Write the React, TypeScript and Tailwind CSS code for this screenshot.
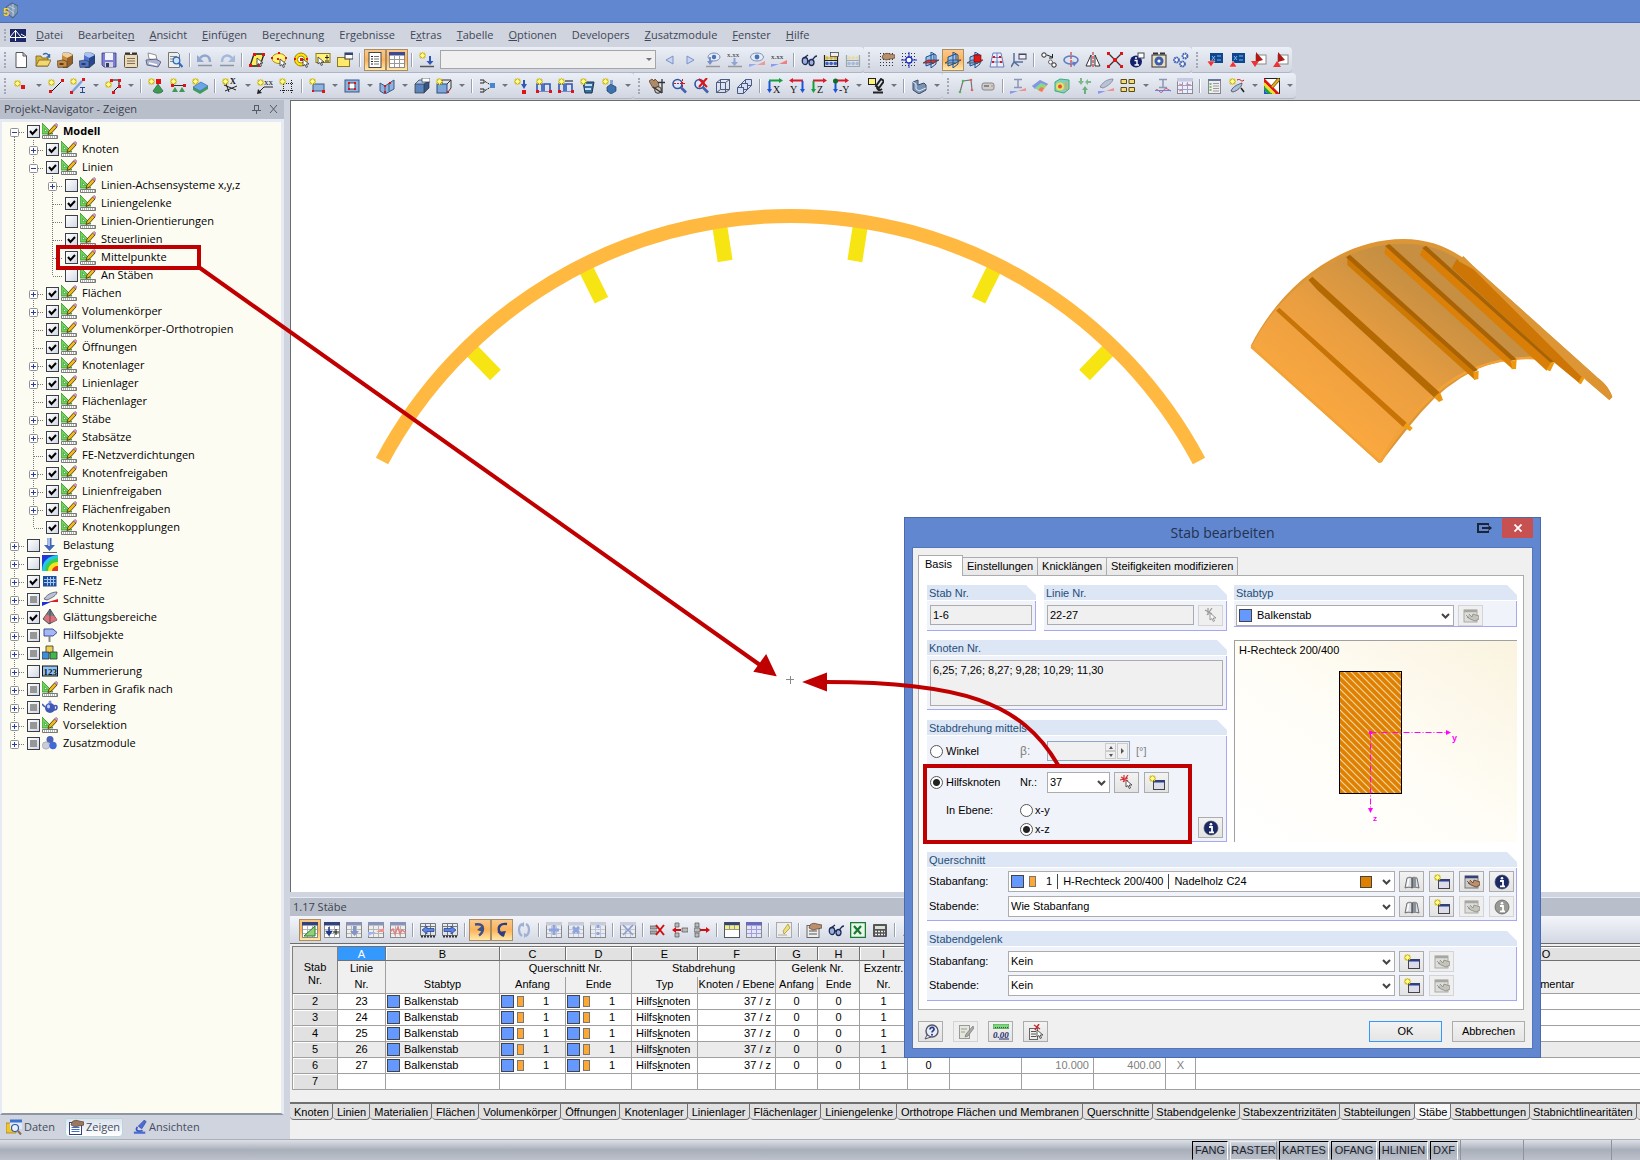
import type { ReactNode } from 'react'

const ui = "font-['Open_Sans','Noto_Sans',sans-serif]"
const ms = "font-['Liberation_Sans',sans-serif]"

/* ---------- icon parts ---------- */

const star = (x = 0, y = 0) => (
  <g transform={`translate(${x} ${y})`}>
    <path d="M3.5 0v7M0 3.5h7M1 1l5 5M6 1L1 6" stroke="#b9a400" strokeWidth="1.4" />
    <path d="M3.5 .5v6M.5 3.5h6M1.500 1.500l4 4M5.500 1.500l-4 4" stroke="#fff04a" strokeWidth="1" />
    <circle cx="3.5" cy="3.5" r="1.4" fill="#fffba0" />
  </g>
)
const dot = (x: number, y: number, s = 3) => <rect x={x} y={y} width={s} height={s} fill="#e01414" />
const cursor = (x: number, y: number) => (
  <path transform={`translate(${x} ${y})`} d="M0 0v7l2-1.5L3.2 8.5l1.3-.6L3.3 5H6z" fill="#fff" stroke="#444" strokeWidth=".9" />
)
const gridDots = (c = '#333') => (
  <path d="M1 1.5h14M1 4.5h14M1 7.5h14M1 10.500h14M1 13.500h14" stroke={c} strokeDasharray="1 2" />
)
const loupe = (
  <>
    <circle cx="6.500" cy="6" r="4.500" fill="#dbe9ff" stroke="#33539b" strokeWidth="1.600" />
    <path d="M10 9.500l5 5" stroke="#3f62b0" strokeWidth="2.600" />
  </>
)
const tableBase = (head = '#34427a', body = '#fff', line = '#b5b5b5') => (
  <>
    <rect x=".5" y=".5" width="15" height="15" fill={body} stroke="#8a8a8a" />
    <rect x="0" y="0" width="16" height="3.500" fill={head} />
    <path d="M1 7.500h14M1 11.500h14M5.500 4v11M10.500 4v11" stroke={line} />
  </>
)
const downArrow = (c = '#2f57b5') => <path d="M7 4h3v5h3l-4.500 5L4 9h3z" fill={c} />
const plane = (redFirst: boolean, block: boolean) => (
  <>
    <path d="M3 5l8-3v9l-8 3z" fill="#9cc4ee" stroke="#1d4f8f" />
    <path d="M0 11l5-3h11l-5 3z" fill={redFirst ? '#e33131' : '#6fa5de'} stroke="#333" strokeWidth=".7" />
    <path d="M8 0l5 3v9l-5 4z" fill="none" stroke="#1d4f8f" />
    {block && <rect x="7" y="3" width="7" height="7" fill="#e01818" stroke="#7a0000" strokeWidth=".6" />}
  </>
)
const axis = (label: string, h: string, v: string, flip = false) => (
  <>
    <path d={flip ? 'M14 2.500H3' : 'M2 2.500h11'} stroke={h} strokeWidth="2" />
    <path d={flip ? 'M4 0v5L0 2.500z' : 'M12 0v5l4-2.500z'} fill={h} />
    <path d={flip ? 'M13.500 3v9' : 'M2.500 3v9'} stroke={v} strokeWidth="2" />
    <path d={flip ? 'M11 11h5l-2.500 4z' : 'M0 11h5l-2.500 4z'} fill={v} />
    <text x={flip ? 1 : 6} y="15" fontSize="10" fontFamily="Liberation Serif" fill="#111">{label}</text>
  </>
)
const abacus = (frame: string, a: string, b: string) => (
  <>
    <path d="M1.500 3v12M14.500 3v12M1 8.500h14M1 14.500h14" stroke={frame} strokeWidth="1.200" />
    <path d="M4 6h9" stroke={a} strokeWidth="3.600" strokeDasharray=".1 4" strokeLinecap="round" />
    <path d="M4 11.500h9" stroke={b} strokeWidth="3.600" strokeDasharray=".1 4" strokeLinecap="round" />
  </>
)
const supports = (
  <>
    <path d="M1 13V6h5v7M8 13V6h6v7" fill="none" stroke="#2f57b5" strokeWidth="1.600" />
    <path d="M1 13.500h14" stroke="#6f8fd0" />
    {dot(0, 12)}
    {dot(13, 12)}
  </>
)
const box3d = (front: string, top: string, side: string) => (
  <>
    <path d="M1 6h9v9H1z" fill={front} />
    <path d="M1 6l4-4h10l-5 4z" fill={top} />
    <path d="M10 6l5-4v8l-5 5z" fill={side} />
    <path d="M1 6h9v9H1zM1 6l4-4h10l-5 4M15 2v8l-5 5" fill="none" stroke="#333" strokeWidth=".7" />
  </>
)
const cabinet = (front: string, top: string, side: string) => (
  <>
    <path d="M6 1h6l4 2v8l-6 5H6z" fill={side} stroke="#333" strokeWidth=".6" />
    <path d="M6 1h6l4 2-6 3-5-2z" fill={top} />
    <path d="M5 3l5 3v4H5z" fill={front} />
    <path d="M0 9l6-1 4 1.500V15l-9 .5z" fill={front} stroke="#333" strokeWidth=".6" />
    <path d="M2.500 12h4" stroke="#222" strokeWidth="1.400" />
  </>
)
const hand = (c = '#b98f6e') => <path d="M4 3c2-2 5-2 7-1l5 1v3l-5 1-4 1-4-2z" fill={c} stroke="#5a4030" strokeWidth=".7" />
const infoBall = (c: string) => (
  <>
    <circle cx="8" cy="8" r="7" fill={c} stroke="#445" strokeWidth=".6" />
    <path d="M6 7h3v5M6 12.300h5" stroke="#fff" strokeWidth="1.800" fill="none" />
    <circle cx="8" cy="4.200" r="1.300" fill="#fff" />
  </>
)
const ipe = (c: string) => <path d="M4 1.500h8M8 1.500v8M4 9.500h8" stroke={c} strokeWidth="1.500" />

const icons: Record<string, ReactNode> = {
  new: <path d="M3 .5h7l3.500 3.500v11.500H3z M10 .5V4h3.500" fill="#fff" stroke="#555" />,
  open: (
    <>
      <path d="M1 14V4h5l1 2h6v8z" fill="#d9b23c" stroke="#76601b" strokeWidth=".8" />
      <path d="M1 14l3-6h12l-3 6z" fill="#f2d873" stroke="#76601b" strokeWidth=".8" />
      <path d="M8 2.500c3-2 5-1 6 2M14.500 2v3h-3" fill="none" stroke="#3968a8" strokeWidth="1.400" />
    </>
  ),
  cabBrown: cabinet('#c98a3e', '#efcf9a', '#94602a'),
  cabBlue: cabinet('#4e74cc', '#a9c2f6', '#27468f'),
  save: (
    <>
      <path d="M1 1h14v14H3l-2-2z" fill="#7d7fd4" stroke="#3a3a7a" strokeWidth=".8" />
      <rect x="4" y="1" width="8" height="7" fill="#f2f2fa" />
      <rect x="4" y="10" width="8" height="5" fill="#d5d5dd" />
      <rect x="5" y="11" width="3" height="4" fill="#39396a" />
    </>
  ),
  clip: (
    <>
      <rect x="1.500" y="2.500" width="13" height="13" rx="1" fill="#e9d9bd" stroke="#67563c" />
      <path d="M2 1.500h5M9 1.500h5" stroke="#333" strokeWidth="2" />
      <path d="M4 6.500h8M4 9h8M4 11.500h8" stroke="#826f52" />
    </>
  ),
  print: (
    <>
      <path d="M3 1l8 2 1 5-8-1z" fill="#fff" stroke="#777" strokeWidth=".8" />
      <path d="M1 8l10-1 5 3-3 5-11-2z" fill="#aeb4d3" stroke="#4a4f70" strokeWidth=".8" />
      <path d="M4 11l8 2" stroke="#fff" strokeWidth="1.500" />
    </>
  ),
  preview: (
    <>
      <path d="M1.500 .5h9l2 2v13h-11z" fill="#eee" stroke="#777" />
      <path d="M3 4.500h7M3 7h4M3 9.500h4" stroke="#888" />
      <circle cx="9.500" cy="8.500" r="3.300" fill="#cfe2fb" stroke="#2f6cb5" strokeWidth="1.300" />
      <path d="M12 11l3.500 4" stroke="#2f6cb5" strokeWidth="2" />
    </>
  ),
  undo: <><path d="M3 6c4-4 10-3 10 4" fill="none" stroke="#8fa6cd" strokeWidth="2.500" /><path d="M0 3v7h7z" fill="#8fa6cd" /><path d="M1 13.500h14" stroke="#8d95a5" strokeWidth="1.500" /></>,
  redo: <><path d="M13 6c-4-4-10-3-10 4" fill="none" stroke="#a3b9d8" strokeWidth="2.500" /><path d="M16 3v7H9z" fill="#a3b9d8" /><path d="M1 13.500h14" stroke="#8d95a5" strokeWidth="1.500" /></>,
  selPar: <><path d="M5 2h10l-4 12H1z" fill="#ffee5e" stroke="#222" strokeWidth="1.300" />{dot(4, 1)}{dot(13, 1)}{dot(0, 12)}{dot(9, 12)}{cursor(8, 6)}</>,
  selEll: <><ellipse cx="8" cy="6.500" rx="7" ry="5" fill="#fff17a" stroke="#b09000" />{dot(0, 5, 2)}{dot(7, 0, 2)}{dot(14, 5, 2)}{dot(6, 6, 2)}{cursor(9, 7)}</>,
  selCirc: <><circle cx="8" cy="7.500" r="6.500" fill="#ffe400" stroke="#a08400" /><circle cx="8" cy="7.500" r="3.500" fill="#fff" stroke="#a08400" />{dot(7, 6)}{dot(1, 6, 2)}{dot(13, 6, 2)}{cursor(10, 7)}</>,
  selRect: <><rect x="1" y="1.500" width="14" height="9" fill="#fff17a" stroke="#8d7a20" /><path d="M10 5.500h4M12 3v4.500M10 9h4" stroke="#222" />{cursor(3, 5)}</>,
  selWin: <><rect x=".5" y="5.500" width="12" height="9" fill="#ffe96a" stroke="#8d7a20" /><rect x="8" y="1" width="8" height="6" fill="#fff" stroke="#334" /><path d="M8 2h8" stroke="#34427a" strokeWidth="2" /></>,
  listView: <><rect x="2" y=".5" width="12" height="15" fill="#fff" stroke="#444" /><path d="M4 4.500h2M4 7h2M4 9.500h2M4 12h2" stroke="#222" /><path d="M7 4.500h5M7 7h5M7 9.500h5M7 12h5" stroke="#777" /></>,
  tableView: tableBase('#3c4b8c', '#fff', '#999'),
  loadNew: <>{star(0, 0)}<path d="M10 4h2v5h2.500L11 13 7.500 9H10z" fill="#2f57b5" /><path d="M1 14.500h14" stroke="#555" strokeWidth="1.500" /></>,
  prev: <path d="M12 4v8L5 8z" fill="#c6d5f3" stroke="#7c93c9" />,
  next: <path d="M4 4v8l7-4z" fill="#c6d5f3" stroke="#7c93c9" />,
  eyeDown: <><ellipse cx="9" cy="5" rx="6" ry="4" fill="#e6ecf7" stroke="#7d8fb5" /><circle cx="9" cy="5" r="2.200" fill="#4a72b8" /><path d="M5 5v6" stroke="#7791c8" strokeWidth="2" /><path d="M2 9h6l-3 4z" fill="#7791c8" /><path d="M1 14.500h14" stroke="#999" strokeWidth="1.500" /></>,
  xxDown: <><text x="0" y="5" fontSize="7" fontFamily="Liberation Serif" fill="#333">x.xx</text><path d="M7.500 6v5" stroke="#8ea4d3" strokeWidth="2" /><path d="M4 10h7l-3.500 4z" fill="#8ea4d3" /><path d="M1 14.500h14" stroke="#999" strokeWidth="1.500" /></>,
  eyeRes: <><ellipse cx="8" cy="5" rx="6.500" ry="4" fill="#e6ecf7" stroke="#7d8fb5" /><circle cx="8" cy="5" r="2.400" fill="#4a72b8" /><path d="M8 13h8V9z" fill="#ef9a9a" /><path d="M0 12h8l-8 3z" fill="#9aa9ef" /></>,
  xxRes: <><text x="0" y="7" fontSize="7" fontFamily="Liberation Serif" fill="#222">x.xx</text><path d="M8 12h8V8z" fill="#ef8080" /><path d="M0 12h8l-8 3z" fill="#8a9af0" /></>,
  glasses: <><ellipse cx="4" cy="9" rx="2.700" ry="3.500" fill="#9bb0dd" stroke="#1f2b55" strokeWidth="1.300" /><ellipse cx="10.500" cy="10.500" rx="2.500" ry="3" fill="#9bb0dd" stroke="#1f2b55" strokeWidth="1.300" /><path d="M3 6l4-3M7 9h1.500M11 8c2-1 2-4 5-4" fill="none" stroke="#1f2b55" strokeWidth="1.300" /></>,
  abacus: <>{abacus('#222', '#d8bb35', '#3f62c0')}<rect x="7.500" y=".5" width="8" height="4" fill="#eee" stroke="#333" strokeWidth=".7" /></>,
  abacusOff: abacus('#9aa', '#e5dca9', '#a9b7dc'),
  handGrid: <>{gridDots()}{hand()}</>,
  grid: <>{gridDots()}<path d="M8 0v16M0 8h16" stroke="#1d2fc4" /><circle cx="8" cy="8" r="3" fill="#fff" stroke="#1d2fc4" strokeWidth="1.300" /></>,
  planeA: plane(true, false),
  planeB: plane(false, false),
  planeC: plane(false, true),
  mesh: <><path d="M4 1h8l3 14H1zM8 1v14M3 5.500h10M2 10h12" fill="#eef" stroke="#6680b8" />{dot(4, 4, 2)}{dot(10, 4, 2)}{dot(3, 9, 2)}{dot(11, 9, 2)}</>,
  csys: <><path d="M3 1v9h9M3 10l-3 5M3 10l5 4" fill="none" stroke="#56709f" strokeWidth="1.500" /><rect x="8" y="2" width="7" height="5" fill="#eef" stroke="#445" /><path d="M8 2.500h7" stroke="#445" /></>,
  copyMove: <><circle cx="3" cy="3" r="2.200" fill="#fff" stroke="#222" /><circle cx="13" cy="13" r="2.200" fill="#fff" stroke="#222" /><circle cx="9.500" cy="10" r="2" fill="#fff" stroke="#666" /><path d="M6 3l5 2M11.500 2v4H8" stroke="#222" fill="none" /></>,
  rotate: <><path d="M8 0v16" stroke="#d01010" strokeDasharray="3 1" /><ellipse cx="8" cy="8" rx="7" ry="4" fill="none" stroke="#5d7cc4" strokeWidth="1.600" /><path d="M9 9.500l5 1-3 4z" fill="#5d7cc4" /></>,
  mirror: <><path d="M8 0v16" stroke="#d01010" strokeDasharray="3 1" /><path d="M6 3v11H1z" fill="#fff" stroke="#333" /><path d="M10 3v11h5z" fill="#fff" stroke="#333" /></>,
  scale: <><path d="M2 2l12 12M14 2L2 14" stroke="#333" strokeWidth="1.300" />{dot(0, 0)}{dot(13, 0)}{dot(0, 13)}{dot(13, 13)}{dot(6, 6, 4)}</>,
  infoWin: <><circle cx="7" cy="9.500" r="6" fill="#14206b" /><path d="M5.500 8.500H8V13M5.500 13H10" stroke="#fff" strokeWidth="1.400" fill="none" /><circle cx="7" cy="6" r="1" fill="#fff" /><rect x="9" y="1" width="6" height="5" fill="#fff" stroke="#445" /></>,
  camera: <><rect x="1" y="3" width="14" height="12" fill="#e9dcc0" stroke="#333" /><path d="M2 1.500h5M9 1.500h5" stroke="#333" strokeWidth="2" /><circle cx="8" cy="9" r="4.500" fill="#3b5ea8" /><circle cx="8" cy="9" r="1.600" fill="#fff" /></>,
  gears: <g fill="#fff" stroke="#3f64b5" strokeWidth="2" strokeDasharray="1.500 .5"><circle cx="3.500" cy="8" r="2.400" /><circle cx="12" cy="4" r="2.400" /><circle cx="9.500" cy="12" r="2.400" /></g>,
  impA: <><rect x="3" y="1" width="13" height="10" fill="#10468e" /><path d="M5 4l3 4M8 4L5 8M10 4h4M10 8h4" stroke="#7ab8f0" /><path d="M0 9h8l-4 6z" fill="#e33" stroke="#fff" strokeWidth=".5" /></>,
  expA: <><rect x="3" y="1" width="13" height="10" fill="#10468e" /><path d="M5 4l3 4M8 4L5 8M10 4h4M10 8h4" stroke="#7ab8f0" /><path d="M0 15h8L4 9z" fill="#e33" stroke="#fff" strokeWidth=".5" /></>,
  impB: <><rect x="5" y="3" width="10" height="9" fill="#fff" stroke="#888" /><path d="M5 0l7 8-7 2z" fill="#b01818" /><path d="M0 9h8l-4 6z" fill="#e33" /></>,
  expB: <><rect x="5" y="3" width="10" height="9" fill="#fff" stroke="#888" /><path d="M5 0l7 8-7 2z" fill="#b01818" /><path d="M0 15h8L4 9z" fill="#e33" /></>,

  node: <>{star(1, 2)}{dot(8, 7, 4)}</>,
  line: <><path d="M3 14L14 3" stroke="#111" />{star(0, 1)}{dot(13, 1)}{dot(1, 12)}</>,
  lineBeam: <><path d="M2 14L12 3" stroke="#7da4d8" strokeWidth="2.500" />{star(0, 0)}{dot(12, 0)}{dot(0, 13)}<path d="M10 9.500h5M12.500 9.500v5M10 14.500h5" stroke="#29469a" /></>,
  poly: <><path d="M5 2h9v6l-6 6" fill="none" stroke="#111" />{star(0, 3)}{dot(5, 1)}{dot(13, 1)}{dot(13, 7)}{dot(7, 13)}</>,
  support: <>{star(0, 0)}{dot(8, 1, 5)}<path d="M10 6l5 7c-2 3-8 3-10 0z" fill="#3d9a52" stroke="#1c5a2b" strokeWidth=".6" /></>,
  hinge: <>{star(0, 0)}<path d="M2 7.500h13" stroke="#333" />{dot(1, 6)}{dot(13, 6)}<path d="M5 9l3 5H2zM12 9l3 5H9z" fill="#3d9a52" /></>,
  surfSupport: <><path d="M1 9l7 4v3l-7-4zM8 13l8-5v3l-8 5z" fill="#3fa04f" /><path d="M1 9l8-5 7 4-8 5z" fill="#6aa6ea" stroke="#2b5b98" strokeWidth=".6" />{star(0, 0)}</>,
  dimX: <><path d="M3 3l4 11M3 13l12-5M2 7l12 5" stroke="#222" fill="none" />{star(0, 0)}<text x="8" y="6" fontSize="8" fontWeight="bold" fontFamily="Liberation Serif" fill="#111">X</text></>,
  dimXX: <><path d="M2 14l5-5h9" stroke="#222" fill="none" /><path d="M0 16l1-5 4 4z" fill="#222" />{star(0, 1)}<text x="7" y="7" fontSize="9" fontFamily="Liberation Serif" fill="#111">xx</text></>,
  selDots: <><path d="M4.500 2v13M12.500 2v13M1 5.500h14M1 12.500h14" stroke="#222" strokeDasharray="1 1" />{star(0, 0)}</>,
  area: <><rect x="4" y="6" width="11" height="7" fill="#8fb3dd" stroke="#36588a" />{star(0, 0)}{dot(13, 12)}{dot(3, 12, 2)}</>,
  opening: <><rect x="1" y="2" width="14" height="12" fill="#8fb3dd" stroke="#36588a" /><rect x="5" y="5" width="6" height="6" fill="#fff" stroke="#445" />{dot(4, 4, 2)}{dot(10, 4, 2)}{dot(4, 10, 2)}{dot(10, 10, 2)}</>,
  curved: <><path d="M1 5l5 3 9-6v9l-9 5-5-3z" fill="#8fb3dd" stroke="#36588a" /><path d="M6 8v7M10 5v8" stroke="#36588a" />{dot(5, 7, 2)}{dot(10, 4, 2)}{dot(5, 13, 2)}</>,
  cubeWin: <>{box3d('#5c86c0', '#a9c8ee', '#33558a')}<rect x="8" y="0" width="8" height="4" fill="#fff" stroke="#334" strokeWidth=".7" /></>,
  cubeAdd: <><path d="M6 2h9v8l-3 4M6 2v4M15 2l-4 4" fill="none" stroke="#333" /><rect x="1" y="6" width="10" height="9" fill="#7da7d8" stroke="#2b4d80" />{star(0, 0)}{dot(11, 13, 2)}</>,
  connect: <><path d="M1 2h4v3H1M1 11h4v3H1" fill="none" stroke="#222" /><path d="M6 3.500l5 3M6 12.500l5-3" stroke="#222" strokeDasharray="2 1" /><rect x="11" y="5" width="5" height="5" fill="#4a86d0" /></>,
  load1: <>{star(0, 0)}<path d="M10 2v5" stroke="#2f57b5" strokeWidth="2" /><path d="M7 6h6l-3 5z" fill="#2f57b5" />{dot(8, 12, 4)}</>,
  load2: <>{supports}{star(0, 0)}</>,
  load3: <>{supports}<path d="M7 3h8" stroke="#111" />{star(0, 0)}</>,
  load4: <><path d="M3 4h11l-2 11H5z" fill="#3c6f9c" stroke="#1a3550" /><path d="M5 7h7M5 11h6" stroke="#bfe0ff" strokeWidth="2" />{star(0, 0)}</>,
  load5: <><path d="M5 9l4-3 5 3v4l-5 3-4-3z" fill="#3d72b0" stroke="#1d3c66" strokeWidth=".7" /><path d="M8 2h3v4H8z" fill="#89a8d0" />{star(0, 0)}</>,
  pan: <><path d="M0 3l3-2 2 2 1-2 3 3 1 4-2 3-4-1z" fill="#b08a66" stroke="#4a3320" strokeWidth=".7" /><circle cx="9" cy="12" r="3.300" fill="#cfc7b5" stroke="#333" /><path d="M13 1v14M9 4.500h7M4 9l9 6" stroke="#333" strokeWidth="1.300" /></>,
  zoomRed: <>{loupe}<path d="M3 5.500h12M11.500 1v9" stroke="#e01414" strokeDasharray="2 1" /></>,
  zoomX: <>{loupe}<path d="M6 1l8 8M14 0L6 9" stroke="#e01414" strokeWidth="2" /></>,
  iso: <path d="M1.500 4.500h9v10h-9zM1.500 4.500l4-3h9v10l-4 3M14.500 1.500l-4 3M5.500 1.500v10h9M5.500 11.500l-4 3" fill="none" stroke="#4b5a80" />,
  cubes: <path d="M.5 9.500h6v6h-6zM4.500 5.500h6v6h-4v-2h-2zM8.500 1.500h6v6h-4v-2h-2zM.5 9.500l8-8M14.500 7.500l-8 8" fill="#d5def2" stroke="#4b5a80" />,
  axX: axis('X', '#14a03c', '#1c56d8'),
  axY: axis('Y', '#d81c2c', '#1c56d8', true),
  axZ: axis('Z', '#d81c2c', '#14a03c'),
  axNY: <>{axis('-Y', '#d81c2c', '#1c56d8')}<circle cx="2.500" cy="3" r="2.500" fill="#0f6c24" /></>,
  scope: <><path d="M13 1l3 2-5 7-3-2zM9 9c0 3 2 4 5 2M5 14.500h10" fill="none" stroke="#222" strokeWidth="2" /><rect x=".5" y=".5" width="7" height="6" fill="#fff27a" stroke="#222" /></>,
  lshape: <><path d="M2 4l5-2v5l6-2 2 2v5l-7 4-6-4z" fill="#7993b5" stroke="#3a4d68" /><path d="M2 4l3 2v5l3 2 7-3" fill="none" stroke="#dfe9f5" /></>,
  frame: <><path d="M2 14L5 3l8-1 1 10" fill="none" stroke="#777" strokeWidth="1.200" /><circle cx="5" cy="3" r="1.300" fill="#5b5" /><circle cx="13" cy="2" r="1.300" fill="#d66" /><circle cx="2" cy="14" r="1.300" fill="#5b5" /><circle cx="14" cy="12" r="1.300" fill="#d66" /></>,
  cam2: <><rect x="2" y="5" width="12" height="7" rx="2" fill="#ccc" stroke="#888" /><rect x="4" y="7" width="5" height="2" fill="#888" /><circle cx="12" cy="8" r="1" fill="#e88" /></>,
  beamRes: <>{ipe('#8d97b5')}<path d="M8 13h8v-3z" fill="#f09090" /><path d="M0 13h8l-8 3z" fill="#8a9af0" /></>,
  fan: <><path d="M0 8l8-6 8 4-6 8z" fill="#f0b860" /><path d="M0 8l8-6 8 4-2 2-5-2-6 5z" fill="#7f96ee" /><path d="M3 10l6-5 5 2-2 3-3-1-3 3z" fill="#86dc86" /><path d="M6 12l3-3 3 1-2 4z" fill="#f07a5a" /></>,
  cubeCol: <><path d="M1 4l5-3 9 1v9l-5 4-9-2z" fill="#7fd0c0" stroke="#4a7" /><circle cx="6" cy="8.500" r="4" fill="#e6e25a" /><circle cx="6" cy="8.500" r="2" fill="#ea4a3a" /><path d="M12 4v8" stroke="#f0a040" strokeWidth="1.500" /></>,
  arrowsG: <><path d="M4 0v3H2l3 4 3-4H6V0zM15 3h-3V1L9 4l3 3V5h3z" fill="#7cb98a" /><path d="M8 16v-4H6l3-4 3 4h-2v4z" fill="#6bb07b" /></>,
  blade: <><path d="M2 9C6 2 12 1 15 1c0 3-5 7-10 9z" fill="#b7c4d8" stroke="#778" strokeWidth=".7" /><path d="M8 13h8v-3z" fill="#f09090" /><path d="M0 13h8l-8 3z" fill="#8a9af0" /></>,
  boxes: <g fill="#f1dd7a" stroke="#5a4a10"><path d="M1 1.500h5.500v4H1zM9 1.500h5.500v4H9zM1 9.500h5.500v4H1zM9 9.500h5.500v4H9z" /></g>,
  beamCurve: <>{ipe('#8d97b5')}<path d="M0 13c3-5 5 5 8 0s5-1 8 0" fill="none" stroke="#d05080" /><path d="M0 12.500h16" stroke="#7080d0" /></>,
  tableDia: <>{tableBase('#c5cade', '#eef', '#9aa3c8')}<path d="M2 6l4 1M9 6l5 1M2 13l4-1" stroke="#e08080" /></>,
  doc: <><rect x="1.500" y="1.500" width="12" height="14" fill="#eee" stroke="#888" /><path d="M1 2h13" stroke="#67779f" strokeWidth="2" /><path d="M3.500 5v9" stroke="#7cba7c" strokeWidth="2" strokeDasharray="2 1" /><path d="M6 5.500h6M6 8h6M6 10.500h6M6 13h6" stroke="#999" /></>,
  knife: <><path d="M2 13C4 8 10 6 13 5c0 4-5 8-9 9z" fill="#aac0de" stroke="#333" strokeWidth=".7" /><path d="M8 2c4-2 4 3 7 0" stroke="#d01010" fill="none" /><path d="M12 10l3 4" stroke="#222" strokeWidth="1.500" />{star(0, 0)}</>,
  palette: (
    <>
      <rect x=".5" y=".5" width="15" height="15" fill="#fff" stroke="#222" />
      <path d="M0 0l16 16h-4L0 4z" fill="#e01414" />
      <path d="M0 4l12 12H8L0 8z" fill="#f2e020" />
      <path d="M0 8l8 8H4l-4-4z" fill="#1ea03c" />
      <path d="M0 12l4 4H0z" fill="#1c56d8" />
      <path d="M15 1L8 9" stroke="#5a4310" strokeWidth="3.400" />
      <path d="M15 1L8 9" stroke="#e8ac22" strokeWidth="2" />
    </>
  ),

  tEdit: <>{tableBase()}<path d="M2 14L13 4v10z" fill="#8fd07c" stroke="#2c7a2c" /></>,
  tDown: <>{tableBase()}<path d="M5 5v6M2.500 9.500h5L5 13z" stroke="#1c3b8c" fill="#1c3b8c" strokeWidth="1.500" /><path d="M9 10h6M12 7v6" stroke="#111" /></>,
  tLoad: <>{tableBase('#8a93b5', '#eee')}{downArrow('#8195c8')}</>,
  tRes: <>{tableBase('#8a93b5', '#eee')}<path d="M8 10h8V6z" fill="#f09090" /><path d="M0 10h8l-8 4z" fill="#a0b0f0" /></>,
  tWave: <>{tableBase('#8a93b5', '#eee')}<path d="M0 10l3-3 2 5 3-7 2 7 2-4 4 3" stroke="#e08080" fill="none" strokeWidth="1.500" /></>,
  tLeft: <><path d="M.5 1.500h15v12H.5zM.5 4.500h15M5.500 1v12M10.500 1v12" stroke="#777" /><path d="M1 14.500h14" stroke="#333" strokeDasharray="2 1" strokeWidth="2" /><path d="M2 8l5-4v2.500h7v3H7V12z" fill="#5a84e0" stroke="#1d3b8c" strokeWidth=".7" /></>,
  tRight: <><path d="M.5 1.500h15v12H.5zM.5 4.500h15M5.500 1v12M10.500 1v12" stroke="#777" /><path d="M1 14.500h14" stroke="#333" strokeDasharray="2 1" strokeWidth="2" /><path d="M14 8L9 4v2.500H2v3h7V12z" fill="#5a84e0" stroke="#1d3b8c" strokeWidth=".7" /></>,
  tHookR: <><path d="M3 2.500c6-1 8 1 8 4s-1 5-4 7" fill="none" stroke="#3d5288" strokeWidth="2.400" /><path d="M5 8l6 2V3z" fill="#3d5288" /></>,
  tHookL: <><path d="M13 2C6 1 4 5 5 9c1 3 3 4 5 5" fill="none" stroke="#2d3f80" strokeWidth="2.400" /><path d="M3 10l9-1-2 5z" fill="#2d3f80" /></>,
  tSync: <><path d="M6 2C2 4 2 11 6 14M10 2c4 2 4 9 0 12" fill="none" stroke="#9fb0d2" strokeWidth="2.200" /><path d="M8 0v5L4 3zM8 16v-5l4 2z" fill="#9fb0d2" /></>,
  tAdd: <>{tableBase('#c8ccd8', '#e9ebf2', '#c0c4d4')}<path d="M8 3v10M3 8h10" stroke="#8fa4dc" strokeWidth="3" /></>,
  tCross: <>{tableBase('#c8ccd8', '#e9ebf2', '#c0c4d4')}<path d="M5 5l6 6M11 5l-6 6" stroke="#8fa4dc" strokeWidth="3" /></>,
  tDots: <>{tableBase('#c8ccd8', '#e9ebf2', '#c0c4d4')}<path d="M8 3v3M8 10v3" stroke="#8fa4dc" strokeWidth="3" /></>,
  tX: <>{tableBase('#c8ccd8', '#e9ebf2', '#c0c4d4')}<path d="M3 3l10 10M13 3L3 13" stroke="#8a9cc8" strokeWidth="1.500" /></>,
  tDel: <><path d="M0 4h7v3H0zM0 9h7v3H0z" fill="#aaa" stroke="#555" strokeWidth=".7" /><path d="M6 3l8 10M14 3L6 13" stroke="#d01010" strokeWidth="2" /></>,
  tRowL: <><path d="M3 1h4v4H3zM3 11h4v4H3zM10 6h6v4h-6z" fill="#bbb" stroke="#555" strokeWidth=".7" /><path d="M9 8H2" stroke="#d01010" strokeWidth="2" /><path d="M4 5v6L0 8z" fill="#d01010" /></>,
  tRowR: <><path d="M1 1h4v4H1zM1 11h4v4H1zM0 6h6v4H0z" fill="#bbb" stroke="#555" strokeWidth=".7" /><path d="M6 8h7" stroke="#d01010" strokeWidth="2" /><path d="M12 5v6l4-3z" fill="#d01010" /></>,
  tYellow: <><rect x=".5" y=".5" width="15" height="15" fill="#fff" stroke="#555" /><path d="M1 2h14" stroke="#34427a" strokeWidth="3" /><path d="M1 3.500h14v4H1z" fill="#f4f07c" /><path d="M1 7.500h14M5.500 3v5M10.500 3v5" stroke="#999" /></>,
  tBlue: tableBase('#6a6ab8', '#e4e4fa', '#a0a0d8'),
  tPen: <><rect x=".5" y=".5" width="15" height="15" fill="#eee" stroke="#aaa" /><path d="M12 2L7 9l1 3 6-6z" fill="#efe07a" stroke="#a09030" strokeWidth=".7" /><path d="M2 13h9" stroke="#aaa" /></>,
  tHand: <><rect x="1" y="3.500" width="12" height="12" fill="#eee" stroke="#666" /><path d="M3 9h8M3 12h8" stroke="#555" />{hand()}</>,
  excel: <><rect x=".5" y=".5" width="15" height="15" fill="#e8f6ea" stroke="#1b7a33" strokeWidth="1.500" /><path d="M4 4l7 8M11 4l-7 8" stroke="#1b7a33" strokeWidth="2.200" /></>,
  calc: <><rect x="1" y="2" width="14" height="13" rx="1" fill="#555" /><rect x="3" y="4" width="10" height="3" fill="#d5e5d5" /><path d="M3 9.500h10M3 12.500h10" stroke="#eee" strokeWidth="1.500" strokeDasharray="2 1" /></>,
  tRest: <path d="M2 14L8 8M2 14h5" stroke="#333" strokeWidth="2" />,

  draw: (
    <>
      <path d="M0 0l11 11H0z" fill="#6fd458" stroke="#2f8f34" strokeWidth=".8" />
      <path d="M2.500 5.500l3 3h-3z" fill="#fdfcf3" stroke="#2f8f34" strokeWidth=".6" />
      <path d="M6 11.500l1-3.500 5.500-6 2.500 2L9.500 10z" fill="#f2b91c" stroke="#4a3c0c" strokeWidth=".9" />
      <path d="M12.500 2L14 .3l2 1.700-1 2z" fill="#dd9cc4" stroke="#8c5a78" strokeWidth=".5" />
      <path d="M.5 12.500h15v3H.5z" fill="#fff" stroke="#6a6a6a" strokeWidth=".9" />
      <path d="M2 14h13" stroke="#6a6a6a" strokeDasharray="1 1" />
    </>
  ),
  loads: <><path d="M5.500 1h4v7h3.500L7.500 14 2 8h3.500z" fill="#3f68b8" /><path d="M6 1h2v8H6z" fill="#a9c0ec" /><path d="M1 15.500h14" stroke="#666" /></>,
  results: <><rect width="16" height="16" fill="#2238d8" /><path d="M0 16C0 6 6 1 16 0v16z" fill="#22c8e8" /><path d="M3 16C3 9 8 4 16 3v13z" fill="#3ccc4a" /><path d="M6 16c0-5 4-9 10-9v9z" fill="#f2e61e" /><path d="M10 16c0-3 3-5 6-5v5z" fill="#e8381a" /></>,
  femesh: <><rect x="1" y="3" width="13" height="10" fill="#1d4f9c" /><path d="M2 6.500h12M2 9.500h12M5.500 4v9M8.500 4v9M11.500 4v9" stroke="#a9c9f2" /><rect x="1.500" y="3.500" width="12.500" height="9.500" fill="none" stroke="#1d4f9c" /></>,
  sections: <><path d="M2 8C6 2 12 1 15 1c0 3-5 6-10 8z" fill="#b7c4d8" stroke="#445" strokeWidth=".7" /><path d="M6 11h10V8z" fill="#d82020" /><path d="M0 11h9l-9 4z" fill="#2030d8" /></>,
  smooth: <><path d="M8 0l7 11-8 4-6-5z" fill="#6e8088" stroke="#334" strokeWidth=".7" /><path d="M4 6l8 1 3 4-8 3-5-4z" fill="#e07078" /><path d="M8 0v15" stroke="#334" strokeWidth=".7" /></>,
  sign: <><path d="M2 2h9l4 3.500L11 9H2z" fill="#a4b8f4" stroke="#3c4f9c" /><path d="M7.500 9v6" stroke="#888" strokeWidth="2" /></>,
  general: <><path d="M4 1h7v7H4z" fill="#f0cf50" stroke="#333" strokeWidth=".8" /><path d="M0 7h7v7H0z" fill="#3f8fd8" stroke="#333" strokeWidth=".8" /><path d="M8 7h7v7H8z" fill="#3cb94a" stroke="#333" strokeWidth=".8" /></>,
  numbers: <><rect x=".5" y="3" width="15" height="10" fill="#8fc4f4" stroke="#111" /><text x="1.500" y="11.500" fontSize="9" fontWeight="bold" fontFamily="Liberation Serif" fill="#111">123</text></>,
  teapot: <><ellipse cx="8" cy="9" rx="5" ry="5" fill="#4059b8" /><path d="M3 8L0 5M12 7c4-2 4 4 0 4" stroke="#4059b8" strokeWidth="1.600" fill="none" /><circle cx="8" cy="3" r="1.500" fill="#7a8fe0" /><ellipse cx="6.500" cy="7.500" rx="1.500" ry="2" fill="#c5d2ff" /></>,
  modules: <><circle cx="8" cy="4.500" r="3.500" fill="#4a62b8" /><circle cx="4" cy="10.500" r="3.700" fill="#c9ccd8" stroke="#889" strokeWidth=".5" /><circle cx="11" cy="10.500" r="3.700" fill="#3f6cd8" /></>,

  pick: <>{cursor(7, 5)}<path d="M2 2l7 4M9 0L4 7M5 0v7M1 5l8-2" stroke="#d23030" strokeWidth="1.200" /></>,
  pickOff: <g opacity=".55">{cursor(7, 5)}<path d="M2 2l7 4M9 0L4 7M5 0v7" stroke="#555" strokeWidth="1.200" /></g>,
  newWin: <><rect x="4.500" y="5.500" width="11" height="9" fill="#dcdcea" stroke="#444" /><path d="M4 6.500h12" stroke="#2b3f8c" strokeWidth="2" />{star(0, 0)}</>,
  book: <><path d="M1 14L3 4c2-1 4-1 5 0 1-1 3-1 5 0l2 10c-3-1-5-1-7 0-2-1-4-1-7 0z" fill="#d9dce2" stroke="#555" strokeWidth=".8" /><path d="M8 4v10l4-1V3.500z" fill="#8d939c" /><path d="M8 4v10" stroke="#444" strokeWidth="1.200" /><path d="M4.500 5L3.500 12" stroke="#fff" strokeWidth="1.500" /></>,
  editHand: <><rect x="1" y="2" width="13" height="12" fill="#ccc" stroke="#777" /><path d="M1 3h13" stroke="#34427a" strokeWidth="2.500" /><path d="M3 7l3 3M6 6l3 3 1-3 6 2v3l-4 2-5-2-3-2" fill="#bd8f6b" stroke="#5a4030" strokeWidth=".8" /></>,
  editHandOff: <><rect x="1" y="2" width="13" height="12" fill="#ddd" stroke="#aaa" /><path d="M1 3h13" stroke="#a5a89f" strokeWidth="2.500" /><path d="M3 7l3 3M6 6l3 3 1-3 6 2v3l-4 2-5-2-3-2" fill="#c4c4bb" stroke="#8a8a80" strokeWidth=".8" /></>,
  info: infoBall('#1b2a66'),
  infoOff: infoBall('#9a9a94'),
  help: <><ellipse cx="9" cy="7" rx="6" ry="6" fill="#e8ecf8" stroke="#556" strokeWidth="1.400" /><path d="M4 11l-2 4 6-2z" fill="#e8ecf8" stroke="#556" /><path d="M7 5.500c0-3 4.500-2.500 4 0-.3 1.500-2 1.500-2 3" fill="none" stroke="#24388c" strokeWidth="1.700" /><circle cx="9" cy="10.800" r="1" fill="#24388c" /></>,
  note: <><rect x="1.500" y="1.500" width="10" height="13" fill="#e4e8dc" stroke="#999" /><path d="M15 2L8 10l-1 3 3-1 6-8z" fill="#aaa" stroke="#777" strokeWidth=".7" /><path d="M3 5h6M3 8h4" stroke="#999" /></>,
  units: <><path d="M0 0h16v4.500H0z" fill="#7fd67f" stroke="#3a8a3a" strokeWidth=".6" /><path d="M2 3.500h13" stroke="#226622" strokeDasharray="1 1" /><text x="0" y="13.500" fontSize="9" fontStyle="italic" fontWeight="bold" fontFamily="Liberation Serif" fill="#1c2c6c">0.00</text><path d="M6 15h10" stroke="#1c2c6c" /></>,
  pickList: <><rect x="1.500" y="4.500" width="8" height="11" fill="#eee" stroke="#666" /><path d="M3 7.500h5M3 10h5M3 12.500h5" stroke="#555" />{cursor(9, 6)}<path d="M6 1l6 4M11 0L7 6" stroke="#c03030" strokeWidth="1.500" /></>,
  navData: <><path d="M0 4h5l1 2h4v8H0z" fill="#f0c52a" stroke="#8a6a10" strokeWidth=".6" /><rect x="4" y="1" width="12" height="9" fill="#dfe9fb" /><path d="M4 2h12" stroke="#3c72d0" strokeWidth="3" /><circle cx="9" cy="9" r="3.500" fill="#e9f2ff" stroke="#345a9c" strokeWidth="1.200" /><path d="M12 12l3 3.500" stroke="#8a6a50" strokeWidth="2" /></>,
  navShow: <><rect x="1.500" y="3.500" width="12" height="12" fill="#fff" stroke="#34427a" /><path d="M3.500 8.500h8M3.500 10.500h8M3.500 12.500h8" stroke="#3c72d0" />{hand('#9a7860')}</>,
  navView: <><path d="M13 0l2 2-5 8-4-3z" fill="#4a6ad8" stroke="#2440a0" strokeWidth=".7" /><path d="M5 8c-3 4 1 6 6 4" fill="none" stroke="#3254c0" strokeWidth="2" /><path d="M1 14.500h13" stroke="#4a6ad8" strokeWidth="2.500" /></>,
}

function Icon({ name, size = 16 }: { name: string; size?: number }) {
  return (
    <svg width={size} height={size} viewBox="0 0 16 16" fill="none" aria-hidden="true" className="shrink-0">
      {icons[name]}
    </svg>
  )
}

/* ---------- toolbars ---------- */

// "|" separator, "v" drop-down arrow, "name*" pressed button
function ToolItems({ items }: { items: string }) {
  return (
    <>
      {items.split(' ').map((item, i) => {
        if (item === '|') {
          return (
            <span key={i} className="flex w-2 shrink-0 justify-center">
              <span className="box-content h-3.5 w-px border-r border-white bg-[#9aa0ad]" />
            </span>
          )
        }
        if (item === 'v') {
          return (
            <button key={i} type="button" aria-label="Mehr" className="flex h-5 w-[13px] shrink-0 items-center justify-center">
              <span className="border-x-3 border-t-3 border-x-transparent border-t-[#70747e]" />
            </button>
          )
        }
        const pressed = item.endsWith('*')
        const name = item.replace('*', '')
        return (
          <button
            key={i}
            type="button"
            aria-label={name}
            aria-pressed={pressed}
            className={`flex h-[22px] w-[22px] shrink-0 items-center justify-center ${
              pressed ? 'border border-[#a98e63] bg-linear-to-b from-[#fbc88a] via-[#fcb25a] to-[#ffe9a8]' : ''
            }`}
          >
            <Icon name={name} />
          </button>
        )
      })}
    </>
  )
}

function ToolGroup({ children, first }: { children: ReactNode; first?: boolean }) {
  return (
    <div className="flex h-[26px] shrink-0 items-center rounded-r-sm border-b border-[#b0b5c1] bg-linear-to-b from-[#ebeff7] to-[#d1d6e1]">
      <span className={`flex shrink-0 items-center pl-1 ${first ? 'w-2.5' : 'w-3'}`}>
        <span className="h-4 border-l-2 border-dotted border-[#a3a8b4]" />
      </span>
      {children}
    </div>
  )
}

const menu: [string, string, string][] = [
  ['', 'D', 'atei'],
  ['Bearbeite', 'n', ''],
  ['', 'A', 'nsicht'],
  ['', 'E', 'infügen'],
  ['Be', 'r', 'echnung'],
  ['Er', 'g', 'ebnisse'],
  ['E', 'x', 'tras'],
  ['', 'T', 'abelle'],
  ['', 'O', 'ptionen'],
  ['Developers', '', ''],
  ['', 'Z', 'usatzmodule'],
  ['', 'F', 'enster'],
  ['', 'H', 'ilfe'],
]

/* ---------- navigator ---------- */

type Row = { label: string; level: number; state: 'on' | 'off' | 'mixed'; box?: '+' | '-'; icon?: string; last?: boolean }

const tree: Row[] = [
  { label: 'Modell', level: 0, state: 'on', box: '-' },
  { label: 'Knoten', level: 1, state: 'on', box: '+' },
  { label: 'Linien', level: 1, state: 'on', box: '-' },
  { label: 'Linien-Achsensysteme x,y,z', level: 2, state: 'off', box: '+' },
  { label: 'Liniengelenke', level: 2, state: 'on' },
  { label: 'Linien-Orientierungen', level: 2, state: 'off' },
  { label: 'Steuerlinien', level: 2, state: 'on' },
  { label: 'Mittelpunkte', level: 2, state: 'on' },
  { label: 'An Stäben', level: 2, state: 'off', last: true },
  { label: 'Flächen', level: 1, state: 'on', box: '+' },
  { label: 'Volumenkörper', level: 1, state: 'on', box: '+' },
  { label: 'Volumenkörper-Orthotropien', level: 1, state: 'on' },
  { label: 'Öffnungen', level: 1, state: 'on' },
  { label: 'Knotenlager', level: 1, state: 'on', box: '+' },
  { label: 'Linienlager', level: 1, state: 'on', box: '+' },
  { label: 'Flächenlager', level: 1, state: 'on' },
  { label: 'Stäbe', level: 1, state: 'on', box: '+' },
  { label: 'Stabsätze', level: 1, state: 'on', box: '+' },
  { label: 'FE-Netzverdichtungen', level: 1, state: 'on' },
  { label: 'Knotenfreigaben', level: 1, state: 'on', box: '+' },
  { label: 'Linienfreigaben', level: 1, state: 'on', box: '+' },
  { label: 'Flächenfreigaben', level: 1, state: 'on', box: '+' },
  { label: 'Knotenkopplungen', level: 1, state: 'on', last: true },
  { label: 'Belastung', level: 0, state: 'off', box: '+', icon: 'loads' },
  { label: 'Ergebnisse', level: 0, state: 'off', box: '+', icon: 'results' },
  { label: 'FE-Netz', level: 0, state: 'on', box: '+', icon: 'femesh' },
  { label: 'Schnitte', level: 0, state: 'mixed', box: '+', icon: 'sections' },
  { label: 'Glättungsbereiche', level: 0, state: 'on', box: '+', icon: 'smooth' },
  { label: 'Hilfsobjekte', level: 0, state: 'mixed', box: '+', icon: 'sign' },
  { label: 'Allgemein', level: 0, state: 'mixed', box: '+', icon: 'general' },
  { label: 'Nummerierung', level: 0, state: 'off', box: '+', icon: 'numbers' },
  { label: 'Farben in Grafik nach', level: 0, state: 'mixed', box: '+' },
  { label: 'Rendering', level: 0, state: 'mixed', box: '+', icon: 'teapot' },
  { label: 'Vorselektion', level: 0, state: 'mixed', box: '+' },
  { label: 'Zusatzmodule', level: 0, state: 'mixed', box: '+', icon: 'modules', last: true },
]

function Branch({ row, first }: { row: Row; first: boolean }) {
  return (
    <svg width="19" height="18" className="shrink-0" aria-hidden="true">
      <path d={`M9.500 ${first ? 9 : 0}V${row.last ? 10 : 18}M10 10.500h9`} stroke="#777" strokeDasharray="1 1" />
      {row.box && (
        <>
          <rect x="5.500" y="6.500" width="8" height="8" rx="1" fill="#fff" stroke="#919191" />
          <path d={row.box === '+' ? 'M7 10.500h5M9.500 8v5' : 'M7 10.500h5'} stroke="#2c3f9c" />
        </>
      )}
    </svg>
  )
}

function TreeRow({ row, first }: { row: Row; first: boolean }) {
  return (
    <li className="flex h-[18px] items-center">
      {Array.from({ length: row.level }, (_, i) => (
        <svg key={i} width="19" height="18" className="shrink-0" aria-hidden="true">
          <path d="M9.500 0v18" stroke="#777" strokeDasharray="1 1" />
        </svg>
      ))}
      <Branch row={row} first={first} />
      <label className="flex items-center">
        <span className="relative mr-0.5 ml-[3px] flex">
          <input
            type="checkbox"
            defaultChecked={row.state === 'on'}
            className="size-[13px] appearance-none border border-[#3b3f4a] bg-linear-to-br from-white to-[#d3d8e4]"
          />
          <svg viewBox="0 0 13 13" className="pointer-events-none absolute inset-0" aria-hidden="true">
            {row.state === 'on' && <path d="M3 6l2.500 3L10 4" fill="none" stroke="#000" strokeWidth="2" />}
            {row.state === 'mixed' && <rect x="3" y="3" width="7" height="7" fill="#979797" />}
          </svg>
        </span>
        <Icon name={row.icon ?? 'draw'} />
        <span className={`ml-[5px] whitespace-nowrap ${row.label === 'Modell' ? 'font-bold' : ''}`}>{row.label}</span>
      </label>
    </li>
  )
}

function Navigator() {
  return (
    <aside className={`flex w-[284px] shrink-0 flex-col ${ui} text-[11px]`}>
      <div className="flex h-[19px] items-center justify-between bg-[#b8bfca] pr-1.5 pb-px pl-1 text-[#3c424e]">
        <h2>Projekt-Navigator - Zeigen</h2>
        <span className="flex gap-2">
          <button type="button" aria-label="Anheften">
            <svg width="9" height="10" fill="none" stroke="#555b68"><path d="M2.500 1v5M6.500 1v5M2 1.500h5M0 6.500h9M4.500 7v3" /></svg>
          </button>
          <button type="button" aria-label="Schließen">
            <svg width="9" height="10" fill="none" stroke="#555b68"><path d="M1 1l7 8M8 1L1 9" /></svg>
          </button>
        </span>
      </div>
      <ul className="flex-1 border-2 border-t-3 border-r-3 border-[#e6eaf4] border-b-[#8e95a3] bg-[#fdfcf3] pl-[3px] text-black">
        {tree.map((row, i) => (
          <TreeRow key={row.label} row={row} first={i === 0} />
        ))}
      </ul>
      <div className="flex h-6 items-center text-[#454d60]">
        <button type="button" className="flex items-center gap-0.5 pr-2.5 pl-1.5"><Icon name="navData" />Daten</button>
        <button type="button" className="flex h-[19px] items-center gap-0.5 rounded-b-sm border border-[#b9d7da] bg-linear-to-b from-[#dce3ee] to-white px-0.5">
          <Icon name="navShow" />Zeigen
        </button>
        <button type="button" className="flex items-center gap-0.5 pl-2.5"><Icon name="navView" size={14} />Ansichten</button>
      </div>
    </aside>
  )
}

/* ---------- work area ---------- */

const ribAngles = [-44, -26.4, -8.8, 8.8, 26.4, 44]

function Canvas() {
  return (
    <main className="min-h-0 flex-1 overflow-hidden border-t border-l border-[#6c6c6c] bg-white">
      <svg width="1349" height="791" viewBox="291 101 1349 791" role="img" aria-label="Tonnendach mit Rippen">
        {ribAngles.map((a) => (
          <rect key={a} x="782.5" y="216" width="15" height="40" fill="#f7e513" transform={`rotate(${a} 790 680)`} />
        ))}
        <path d="M382 461A463 463 0 0 1 1199 461" fill="none" stroke="#ffb940" strokeWidth="14" />
        <path d="M790.500 676v8M786 679.500h8" stroke="#8a8a8a" />

        <defs>
          <linearGradient id="shell" x1="0.1" y1="0.75" x2="0.62" y2="0.2">
            <stop offset="0" stopColor="#fdaa3f" />
            <stop offset=".5" stopColor="#ec9f40" />
            <stop offset="1" stopColor="#c68f42" />
          </linearGradient>
        </defs>
        <g transform="translate(1230 220) scale(.33333)">
          <path d="M62 378C150 200 330 57 520 57c90 0 160 35 215 86l370 332c20 15 35 35 42 56l-9 9-98-84-90-39q-60-10-90-2-70 10-125 35-90 45-160 125c-45 52-85 105-123 153h-6z" fill="#dc9636" />
          <path d="M64 380C150 210 330 71 520 71c80 0 140 25 190 66L930 416q-100-5-205 35-80 38-150 115c-50 55-85 100-123 160z" fill="url(#shell)" />
          <path d="M64 380l386 346M452 726C520 590 640 480 740 443q90-35 190-28" fill="none" stroke="#f2a236" strokeWidth="8" />
          <path d="M148 263l382 345-10 14L138 272z" fill="#c77306" /><path d="M530 608l18 16-8 10-20-14z" fill="#f29c14" />
          <path d="M247 170l383 348-18 14-350-322-27-30z" fill="#b46903" /><path d="M630 516l9 24-12 6-15-14z" fill="#ea9410" />
          <path d="M352 112l380 343 3 25L352 135z" fill="#cf7905" /><path d="M360 104l384 346-12 6L348 112z" fill="#aa6304" /><path d="M730 455l16-2-1 24-12 3z" fill="#ee9a10" />
          <path d="M467 80l378 342 2 25-384-347z" fill="#dc8007" /><path d="M478 72l382 346-15 4L465 78z" fill="#aa6304" /><path d="M845 422l15-3-2 28-13 1z" fill="#ee9a10" />
          <path d="M680 118l45 20 342 327-16 27-80-66-306-282z" fill="#cd7605" />
          <path d="M580 80l90 82 294 265-14 25-380-347z" fill="#d97e07" /><path d="M588 77l384 349-9 3L577 84z" fill="#a66205" /><path d="M963 427h11l-13 27-12-5z" fill="#ee9a10" />
          <path d="M1057 465h12l-16 28-8-5z" fill="#ee9a10" />
          <path d="M700 108l30 30 370 332-18 8-30-10-322-320-45-25z" fill="#dd9636" />
          <path d="M1062 456l43 19c20 15 35 35 42 56l-9 9-70-60z" fill="#dc9330" />
        </g>
      </svg>
    </main>
  )
}

const columns = [45, 48, 114, 66, 66, 66, 78, 42, 42, 48, 42, 72, 72, 72, 30, 701]
const letters = 'ABCDEFGHIJKLMNO'.split('')

const members = [
  { nr: 2, line: 23 },
  { nr: 3, line: 24 },
  { nr: 4, line: 25 },
  { nr: 5, line: 26 },
  { nr: 6, line: 27 },
]

const sheets = [
  'Knoten', 'Linien', 'Materialien', 'Flächen', 'Volumenkörper', 'Öffnungen', 'Knotenlager', 'Linienlager',
  'Flächenlager', 'Liniengelenke', 'Orthotrope Flächen und Membranen', 'Querschnitte', 'Stabendgelenke',
  'Stabexzentrizitäten', 'Stabteilungen', 'Stäbe', 'Stabbettungen', 'Stabnichtlinearitäten', 'Stabsätze',
]

const cell = 'border border-[#a0a0a0] p-0 text-center'
const head = 'bg-[#f0f0f0] p-0 text-center font-normal'
const rowHead = 'border border-[#a0a0a0] p-0 text-center bg-[#e1e1e1] font-normal shadow-[inset_1px_1px_0_#fff]'

function Swatches() {
  return (
    <>
      <span className="ml-px inline-block h-[13px] w-[13px] border border-[#444] bg-[#6699ff] align-middle" />
      <span className="ml-[3px] inline-block h-[11px] w-[7px] border border-[#777] bg-[#ffa733] align-middle" />
    </>
  )
}

function MemberTable() {
  return (
    <div className="overflow-hidden border-t border-[#6c6c6c] bg-[#f0f0f0] pt-0.5 pl-0.5">
      <table className="w-[1604px] table-fixed border-collapse border border-[#808080] text-[11px] leading-[13px]">
        <colgroup>
          {columns.map((w, i) => (
            <col key={i} style={{ width: w }} />
          ))}
        </colgroup>
        <thead>
          <tr className="h-[14px]">
            <th rowSpan={3} className="border border-[#808080] bg-[#e1e1e1] p-0 pt-2 font-normal">Stab<br />Nr.</th>
            {letters.map((l) => (
              <th
                key={l}
                className={`border border-[#707070] p-0 leading-3 font-normal ${l === 'A' ? 'bg-[#3399ff] text-white' : 'bg-[#e1e1e1] shadow-[inset_1px_1px_0_#fff]'}`}
              >
                {l}
              </th>
            ))}
          </tr>
          <tr className="h-4">
            <th className={`${head} border-x border-[#a0a0a0]`}>Linie</th>
            <th className={`${head} border-x border-[#a0a0a0]`} />
            <th colSpan={2} className={`${head} border-x border-[#a0a0a0]`}>Querschnitt Nr.</th>
            <th colSpan={2} className={`${head} border-x border-[#a0a0a0]`}>Stabdrehung</th>
            <th colSpan={2} className={`${head} border-x border-[#a0a0a0]`}>Gelenk Nr.</th>
            <th className={`${head} border-x border-[#a0a0a0]`}>Exzentr.</th>
            <th className={head} /><th className={head} /><th className={head} /><th className={head} /><th className={head} />
            <th className={head} />
          </tr>
          <tr className="h-[17px]">
            {['Nr.', 'Stabtyp', 'Anfang', 'Ende', 'Typ', 'Knoten / Ebene', 'Anfang', 'Ende', 'Nr.', '', '', '', '', '', 'Kommentar'].map((t, i) => (
              <th key={i} className={`${head} border-x border-b border-[#a0a0a0] whitespace-nowrap`}>{t}</th>
            ))}
          </tr>
        </thead>
        <tbody>
          {members.map(({ nr, line }) => (
            <tr key={nr} className={`h-4 ${nr === 5 ? 'bg-[#ebebeb]' : 'bg-white'}`}>
              <th className={rowHead}>{nr}</th>
              <td className={cell}>{line}</td>
              <td className={`${cell} !text-left`}>
                <span className="ml-px inline-block h-[13px] w-[13px] border border-[#444] bg-[#6699ff] align-middle" />
                <span className="ml-1 align-middle">Balkenstab</span>
              </td>
              {['a', 'b'].map((k) => (
                <td key={k} className={cell}>
                  <span className="flex items-center">
                    <Swatches />
                    <span className="mr-4 ml-auto">1</span>
                  </span>
                </td>
              ))}
              <td className={`${cell} !text-left`}><span className="ml-1">Hilfs<u>k</u>noten</span></td>
              <td className={`${cell} !text-right`}><span className="mr-1">37 / z</span></td>
              <td className={cell}>0</td>
              <td className={cell}>0</td>
              <td className={cell}>1</td>
              <td className={cell}>0</td>
              <td className={cell} />
              <td className={`${cell} !text-right text-[#808080]`}><span className="mr-1">10.000</span></td>
              <td className={`${cell} !text-right text-[#808080]`}><span className="mr-1">400.00</span></td>
              <td className={`${cell} text-[#808080]`}>X</td>
              <td className={cell} />
            </tr>
          ))}
          <tr className="h-4 bg-white">
            <th className={rowHead}>7</th>
            {letters.map((l) => (
              <td key={l} className={cell} />
            ))}
          </tr>
        </tbody>
      </table>
    </div>
  )
}

function TablePanel() {
  return (
    <section className={`shrink-0 overflow-hidden bg-[#f0f0f0] pb-[19px] text-black ${ms}`}>
      <h2 className={`flex h-[19px] items-center border-t border-[#e6eaf4] bg-[#b8bfca] pl-[3px] text-[11px] text-[#3c424e] ${ui}`}>1.17 Stäbe</h2>
      <div className="flex h-[27px] items-center bg-linear-to-b from-[#f3f5fa] to-[#d3d8e3] pl-[9px]">
        <ToolItems items="tEdit* tDown tLoad tRes tWave | tLeft tRight | tHookR* tHookL* tSync | tAdd tCross tDots | tX | tDel tRowL tRowR | tYellow tBlue | tPen | tHand glasses excel calc | tRest" />
      </div>
      <MemberTable />
      <nav className="mt-3 flex items-start overflow-hidden border-t-2 border-[#707070] text-[11px]">
        {sheets.map((s) => (
          <button
            key={s}
            type="button"
            className={`h-4 shrink-0 rounded-b-sm border-r border-b border-[#707070] whitespace-nowrap ${s.startsWith('Stab') ? 'px-[3px]' : 'pr-[3px] pl-1'} ${s === 'Stäbe' ? 'bg-[#f8f8f8] shadow-[0_-2px_0_#f8f8f8]' : 'bg-[#e1e1e1]'}`}
          >
            {s}
          </button>
        ))}
      </nav>
    </section>
  )
}

/* ---------- dialog ---------- */

function Group({ title, className = '', children }: { title: string; className?: string; children: ReactNode }) {
  return (
    <fieldset className={`flex min-w-0 flex-col ${className}`}>
      <legend className="contents">
        <span className="block h-4 border-b border-white bg-[#dce6f5] pl-0.5 leading-4 text-[#1f4e79] [clip-path:polygon(0_0,calc(100%-10px)_0,100%_10px,100%_100%,0_100%)]">
          {title}
        </span>
      </legend>
      <div className="flex-1 border-r border-b border-[#a8a8ee] bg-[#f0f3fa]">{children}</div>
    </fieldset>
  )
}

function IconButton({ icon, label, off }: { icon: string; label: string; off?: boolean }) {
  return (
    <button
      type="button"
      aria-label={label}
      disabled={off}
      className={`flex h-[21px] w-[25px] shrink-0 items-center justify-center border ${off ? 'border-[#d4d4d4] bg-[#efefef]' : 'border-[#acacac] bg-linear-to-b from-[#f3f3f3] to-[#e3e3e3]'}`}
    >
      <Icon name={icon} />
    </button>
  )
}

function Select({ label, value, className = '', selectClass = 'pl-1', children }: {
  label: string; value: string; className?: string; selectClass?: string; children?: ReactNode
}) {
  return (
    <span className={`relative flex h-[21px] ${className}`}>
      <select aria-label={label} defaultValue={value} className={`w-full appearance-none border border-[#acacac] bg-white ${selectClass}`}>
        <option>{value}</option>
      </select>
      <span className="pointer-events-none absolute inset-y-0 right-1 left-[3px] flex items-center">
        <span className="flex flex-1 items-center">{children}</span>
        <svg width="9" height="6" fill="none" stroke="#444" strokeWidth="2" aria-hidden="true">
          <path d="M1 1l3.500 3.500L8 1" />
        </svg>
      </span>
    </span>
  )
}

const radio =
  "size-[13px] appearance-none rounded-full border border-[#555] bg-white checked:bg-[radial-gradient(circle,#222_0_3px,#fff_4px)]"

function Preview() {
  return (
    <div className="mt-[9px] flex-1 border-t border-l border-[#a0a0a0] bg-linear-to-tr from-white via-[#fffdf6] to-[#faf3df]">
      <svg width="282" height="200" viewBox="1235 641 282 200" role="img" aria-label="Querschnitt">
        <defs>
          <pattern id="hatch" width="7" height="7" patternUnits="userSpaceOnUse">
            <rect width="7" height="7" fill="#e08000" />
            <path d="M-1 -1l9 9M-1 6l2 2M6 -1l2 2" stroke="#f6d6a4" strokeWidth="1.200" />
          </pattern>
        </defs>
        <text x="1239" y="654" fontSize="11" fontFamily="Liberation Sans" fill="#000">H-Rechteck 200/400</text>
        <rect x="1339.500" y="671.500" width="62" height="122" fill="url(#hatch)" stroke="#000" />
        <path d="M1370.500 732.500h78M1370.500 732.500v78" stroke="#ff00ff" strokeDasharray="6 2 1 2" />
        <rect x="1369" y="731" width="3" height="3" fill="#f0f" />
        <path d="M1446 730v5l5-2.500zM1368 808h5l-2.500 5z" fill="#f0f" />
        <text x="1452" y="741" fontSize="9" fontWeight="bold" fontFamily="Liberation Sans" fill="#f0f">y</text>
        <text x="1373" y="821" fontSize="8" fontWeight="bold" fontFamily="Liberation Sans" fill="#f0f">z</text>
      </svg>
    </div>
  )
}

function MemberDialog() {
  return (
    <div role="dialog" aria-label="Stab bearbeiten" className={`absolute top-[517px] left-[904px] w-[637px] border border-[#4a6aad] bg-[#6087d0] text-[11px] text-black ${ms}`}>
      <header className="relative flex h-[29px] items-center justify-center">
        <h2 className={`text-[14px] text-[#23324f] ${ui}`}>Stab bearbeiten</h2>
        <div className="absolute top-0 right-[7px] flex items-start">
          <button type="button" aria-label="Andocken" className="p-1 pt-[5px] pr-2.5">
            <svg width="15" height="10" fill="none" stroke="#1d2433" strokeWidth="2"><path d="M12 1H1v8h11M5 5h9" /><path d="M11 2.500L14.500 5 11 7.500" strokeWidth="1" /></svg>
          </button>
          <button type="button" aria-label="Schließen" className="flex h-5 w-[31px] items-center justify-center bg-[#c75050]">
            <svg width="8" height="8" stroke="#fff" strokeWidth="1.800"><path d="M.5 .5l7 7M7.500 .5l-7 7" /></svg>
          </button>
        </div>
      </header>
      <div className="mx-[7px] mb-2 border border-[#5674b8] bg-[#f0f0f0] px-[5px] pt-[7px] pb-1.5">
        <div className="flex items-end" role="tablist">
          <button type="button" role="tab" aria-selected="true" className="relative -mb-px h-[21px] w-[45px] border border-b-0 border-[#acacac] bg-white pb-1 pl-1.5 text-left">Basis</button>
          {['Einstellungen', 'Knicklängen', 'Steifigkeiten modifizieren'].map((t) => (
            <button key={t} type="button" role="tab" aria-selected="false" className="h-[18px] border border-b-0 border-l-0 border-[#acacac] bg-linear-to-b from-[#f2f2f2] to-[#e8e8e8] px-1">
              {t}
            </button>
          ))}
        </div>

        <div className="mr-[3px] border border-[#acacac] bg-white pt-[9px] pr-1.5 pb-2 pl-2">
          <div className="flex gap-[7px]">
            <div className="w-[300px]">
              <div className="flex gap-2">
                <Group title="Stab Nr." className="h-[46px] w-[109px]">
                  <input aria-label="Stab Nr." readOnly defaultValue="1-6" className="mx-[3px] mt-1 h-5 w-[102px] border border-[#acacac] bg-[#f0f0f0] px-0.5" />
                </Group>
                <Group title="Linie Nr." className="h-[46px] flex-1">
                  <div className="flex gap-1 px-[3px] pt-1">
                    <input aria-label="Linie Nr." readOnly defaultValue="22-27" className="h-5 min-w-0 flex-1 border border-[#acacac] bg-[#f0f0f0] px-0.5" />
                    <IconButton icon="pickOff" label="Linie wählen" off />
                  </div>
                </Group>
              </div>
              <Group title="Knoten Nr." className="mt-[9px] h-[70px]">
                <textarea aria-label="Knoten Nr." readOnly defaultValue="6,25; 7,26; 8,27; 9,28; 10,29; 11,30" className="mx-[3px] mt-1 block h-[46px] w-[293px] resize-none border border-[#acacac] bg-[#f0f0f0] px-0.5 py-px" />
              </Group>
              <Group title="Stabdrehung mittels" className="mt-2.5 h-[122px]">
                <div className="px-[3px] pt-[5px]">
                  <div className="flex h-5 items-center">
                    <label className="flex w-[90px] items-center gap-[3px]"><input type="radio" name="rot" className={radio} />Winkel</label>
                    <span className="w-[27px] text-[12px] text-[#808080]">β:</span>
                    <span className="flex h-5 w-[83px] items-center justify-end gap-px border border-[#8fa8c8] bg-[#f0f0f0] pr-px">
                      <input aria-label="β" disabled className="h-full min-w-0 flex-1" />
                      <span className="flex flex-col">
                        <button type="button" aria-label="Mehr" className="flex h-2 w-[11px] items-center justify-center border border-[#ccc]"><span className="border-x-2 border-b-3 border-x-transparent border-b-[#555]" /></button>
                        <button type="button" aria-label="Weniger" className="flex h-2 w-[11px] items-center justify-center border border-[#ccc]"><span className="border-x-2 border-t-3 border-x-transparent border-t-[#555]" /></button>
                      </span>
                      <button type="button" aria-label="Auswahl" className="flex h-4 w-[11px] items-center justify-center border border-[#ccc]"><span className="border-y-3 border-l-3 border-y-transparent border-l-[#555]" /></button>
                    </span>
                    <span className="ml-1.5 text-[#808080]">[°]</span>
                  </div>
                  <div className="mt-[11px] flex h-[21px] items-center">
                    <label className="flex w-[90px] items-center gap-[3px]"><input type="radio" name="rot" defaultChecked className={radio} />Hilfsknoten</label>
                    <span className="w-[27px]">Nr.:</span>
                    <Select label="Hilfsknoten Nr." value="37" className="w-[63px]" selectClass="pl-0.5" />
                    <span className="ml-1 flex gap-[5px]">
                      <IconButton icon="pick" label="Knoten wählen" />
                      <IconButton icon="newWin" label="Neuer Knoten" />
                    </span>
                  </div>
                  <div className="mt-2 flex">
                    <span className="w-[90px] pl-4 leading-[18px]">In Ebene:</span>
                    <div>
                      <label className="flex h-[18px] items-center gap-0.5"><input type="radio" name="plane" className={radio} />x-y</label>
                      <label className="mt-px flex h-[18px] items-center gap-0.5"><input type="radio" name="plane" defaultChecked className={radio} />x-z</label>
                    </div>
                    <span className="ml-auto self-end"><IconButton icon="info" label="Info" /></span>
                  </div>
                </div>
              </Group>
            </div>

            <div className="flex min-w-0 flex-1 flex-col">
              <Group title="Stabtyp" className="h-[46px]">
                <div className="flex gap-1 px-0.5 pt-1">
                  <Select label="Stabtyp" value="Balkenstab" className="w-[218px]" selectClass="pl-5">
                    <span className="size-[13px] border border-[#444] bg-[#6699ff]" />
                  </Select>
                  <IconButton icon="editHandOff" label="Bearbeiten" off />
                </div>
              </Group>
              <Preview />
            </div>
          </div>

          <Group title="Querschnitt" className="mt-2.5 h-[69px]">
            <div className="flex flex-col gap-1 px-0.5 pt-[3px]">
              <div className="flex items-center">
                <span className="w-[79px]">Stabanfang:</span>
                <Select label="Querschnitt Stabanfang" value="1 | H-Rechteck 200/400 | Nadelholz C24" className="w-[387px]" selectClass="text-transparent">
                  <span className="size-[13px] border border-[#444] bg-[#6699ff]" />
                  <span className="ml-[5px] h-[11px] w-[7px] border border-[#777] bg-[#ffa733]" />
                  <span className="ml-2.5">1</span>
                  <span className="mx-[5px] h-[15px] w-px bg-[#444]" />
                  <span>H-Rechteck 200/400</span>
                  <span className="mx-[5px] h-[15px] w-px bg-[#444]" />
                  <span>Nadelholz C24</span>
                  <span className="mr-2.5 ml-auto size-3 border border-[#444] bg-[#e08000]" />
                </Select>
                <span className="ml-1 flex gap-[5px]">
                  <IconButton icon="book" label="Bibliothek" />
                  <IconButton icon="newWin" label="Neu" />
                  <IconButton icon="editHand" label="Bearbeiten" />
                  <IconButton icon="info" label="Info" />
                </span>
              </div>
              <div className="flex items-center">
                <span className="w-[79px]">Stabende:</span>
                <Select label="Querschnitt Stabende" value="Wie Stabanfang" className="w-[387px]" selectClass="pl-0.5" />
                <span className="ml-1 flex gap-[5px]">
                  <IconButton icon="book" label="Bibliothek" />
                  <IconButton icon="newWin" label="Neu" />
                  <IconButton icon="editHandOff" label="Bearbeiten" off />
                  <IconButton icon="infoOff" label="Info" off />
                </span>
              </div>
            </div>
          </Group>

          <Group title="Stabendgelenk" className="mt-2.5 h-[70px]">
            <div className="flex flex-col gap-[3px] px-0.5 pt-1">
              {['Stabanfang:', 'Stabende:'].map((t) => (
                <div key={t} className="flex items-center">
                  <span className="w-[79px]">{t}</span>
                  <Select label={`Gelenk ${t}`} value="Kein" className="w-[387px]" selectClass="pl-0.5" />
                  <span className="ml-1 flex gap-[5px]">
                    <IconButton icon="newWin" label="Neu" />
                    <IconButton icon="editHandOff" label="Bearbeiten" off />
                  </span>
                </div>
              ))}
            </div>
          </Group>
        </div>

        <footer className="mt-[11px] mr-0.5 flex items-center gap-2.5">
          <IconButton icon="help" label="Hilfe" />
          <IconButton icon="note" label="Kommentar" off />
          <IconButton icon="units" label="Einheiten" />
          <IconButton icon="pickList" label="Auswahl" />
          <button type="button" className="ml-auto h-[21px] w-[73px] border border-[#3399ff] bg-linear-to-b from-[#f3f3f3] to-[#e5e5e5]">OK</button>
          <button type="button" className="h-[21px] w-[73px] border border-[#acacac] bg-linear-to-b from-[#f3f3f3] to-[#e5e5e5]">Abbrechen</button>
        </footer>
      </div>
    </div>
  )
}

// red callouts between the navigator, the centre point and the dialog
function Callouts() {
  return (
    <svg width="1640" height="1160" className="pointer-events-none absolute top-0 left-0" fill="none" stroke="#c00000" strokeWidth="4" aria-hidden="true">
      <rect x="58" y="247" width="141" height="21" />
      <path d="M200 268L760 665" />
      <path d="M775 675l-20-4 11-15z" fill="#c00000" strokeWidth="2" />
      <rect x="925" y="766" width="265" height="76" />
      <path d="M1058 765C1022 702 960 682 826 682" />
      <path d="M805 682l21-8v16z" fill="#c00000" strokeWidth="2" />
    </svg>
  )
}

const modes = [
  { label: 'FANG', w: 'w-[36px]' },
  { label: 'RASTER', w: 'w-[47px]', up: true },
  { label: 'KARTES', w: 'w-[50px]' },
  { label: 'OFANG', w: 'w-[46px]' },
  { label: 'HLINIEN', w: 'w-[49px]' },
  { label: 'DXF', w: 'w-[28px]' },
]

export default function App() {
  return (
    <div className={`relative flex h-screen flex-col overflow-hidden bg-[#cfd4de] ${ms}`}>
      <header className="flex h-[23px] shrink-0 items-center border-b border-[#4a70bd] bg-[#6087d0] pl-0.5">
        <svg width="16" height="18" aria-hidden="true">
          <path d="M4 5l6-4 6 3v6l-5 6-4-3z" fill="#7d97b4" stroke="#3d5068" strokeWidth=".8" />
          <path d="M7 4l6 3M6 7l6 4M11 2v12" stroke="#c8d8ec" strokeWidth=".8" />
          <text x="1" y="14" fontSize="11" fontWeight="bold" fontFamily="Liberation Sans" fill="#ffd21e">5</text>
        </svg>
      </header>

      <nav className={`flex h-6 shrink-0 items-center text-[11px] text-[#3f4759] ${ui}`}>
        <span className="ml-1 h-3 border-l-2 border-dotted border-[#a3a8b4]" />
        <svg width="16" height="13" className="mr-2.5 ml-1" aria-hidden="true">
          <rect width="16" height="13" fill="#1b2766" />
          <path d="M0 8.500h16M5.500 1v11M5 2L0 8M6 2l5 6M11 5l5 3" stroke="#fff" fill="none" />
        </svg>
        <span className="flex gap-[15px]">
          {menu.map(([a, u, b]) => (
            <button key={a + u + b} type="button">{a}{u && <u>{u}</u>}{b}</button>
          ))}
        </span>
      </nav>

      <div className="flex shrink-0">
        <ToolGroup first>
          <ToolItems items="new open cabBrown cabBlue save clip print preview | undo redo | selPar selEll selCirc selRect selWin | listView* tableView* | loadNew" />
          <span className="relative mx-0.5 flex">
            <select aria-label="Lastfall" className="h-[19px] w-[216px] appearance-none border border-[#a5a5a5] bg-[#f0f0f0]" />
            <span className="pointer-events-none absolute top-2 right-1 border-x-3 border-t-3 border-x-transparent border-t-[#70747e]" />
          </span>
          <ToolItems items="prev next eyeDown xxDown eyeRes xxRes | glasses abacus abacusOff" />
        </ToolGroup>
        <ToolGroup>
          <ToolItems items="handGrid grid planeA planeB* planeC mesh csys | copyMove rotate mirror scale infoWin camera gears" />
        </ToolGroup>
        <ToolGroup>
          <ToolItems items="impA expA impB expB" />
        </ToolGroup>
      </div>
      <div className="flex shrink-0">
        <ToolGroup first>
          <ToolItems items="node v line lineBeam v poly v | support hinge surfSupport | dimX v dimXX selDots | area v opening v curved v cubeWin cubeAdd v | connect v load1 load2 load3 load4 load5 v" />
        </ToolGroup>
        <ToolGroup>
          <ToolItems items="pan zoomRed zoomX iso cubes | axX axY axZ axNY v scope v | lshape v" />
        </ToolGroup>
        <ToolGroup>
          <ToolItems items="frame cam2 | beamRes fan cubeCol arrowsG blade boxes v beamCurve tableDia | doc knife v palette v" />
        </ToolGroup>
      </div>

      <div className="mt-px flex min-h-0 flex-1 border-b border-[#a9afbb]">
        <Navigator />
        <div className="ml-1.5 flex min-w-0 flex-1 flex-col gap-[5px]">
          <Canvas />
          <TablePanel />
        </div>
      </div>

      <footer className="flex h-5 shrink-0 items-stretch justify-end bg-linear-to-b from-[#dde0e6] via-[#a9afba] to-[#bcc1cb] text-[11px] text-[#20242e]">
        <div className="flex shrink-0 gap-0.5 pt-px">
          {modes.map(({ label, w, up }) => (
            <button
              key={label}
              type="button"
              className={`${w} flex shrink-0 justify-center border leading-4 ${up ? 'border-[#eceef2] border-r-[#8d929d]' : 'border-t-black border-r-white border-b-transparent border-l-black'}`}
            >
              {label}
            </button>
          ))}
        </div>
        <span className="ml-0.5 w-[63px] shrink-0 border-l border-[#8d929d]" />
        <span className="w-[88px] shrink-0 border-l border-[#8d929d]" />
        <span className="w-[29px] shrink-0 border-l border-[#8d929d]" />
      </footer>

      <MemberDialog />
      <Callouts />
    </div>
  )
}
